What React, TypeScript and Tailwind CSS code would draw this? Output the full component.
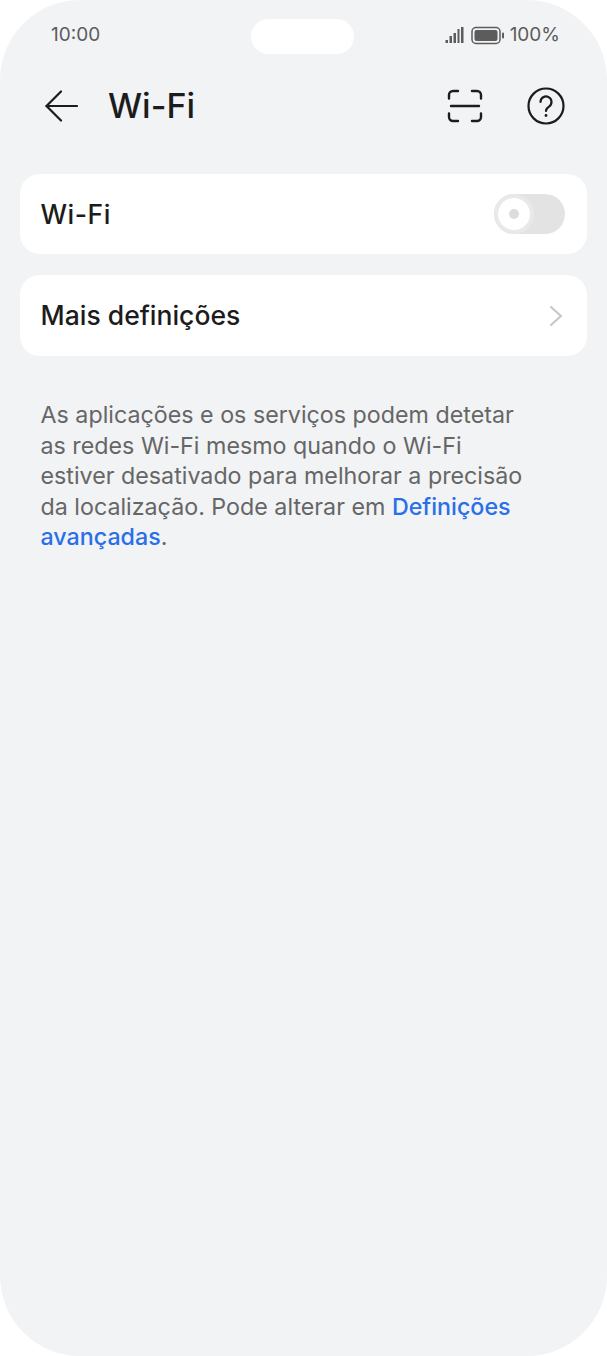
export default function App() {
  return (
    <div className="h-[1356px] w-[607px] bg-white font-['Inter',sans-serif]">
      <div className="flex h-full flex-col rounded-[80px] bg-[#f1f3f5]">
        {/* status bar */}
        <div className="flex items-center pl-[51px] pr-[47px] pt-[19px]">
          <div className="flex-1 pb-[4px] text-[19px] leading-[31px] text-[#5c5c5c]">10:00</div>
          <div className="mr-[6px] h-[35px] w-[103px] rounded-full bg-white" />
          <div className="flex flex-1 items-center justify-end text-[19px] leading-[31px] text-[#5c5c5c]">
            <svg className="mb-[2px]" width="20" height="18" viewBox="0 0 20 18" fill="#5c5c5c">
              <rect x="0.500" y="13" width="2.500" height="3" />
              <rect x="4.500" y="9" width="2.500" height="7" />
              <rect x="8.500" y="6" width="2.500" height="10" />
              <rect x="12.500" y="2" width="2" height="14" />
              <rect x="16" y="0" width="2.500" height="16" />
            </svg>
            <svg className="ml-[6px] mb-[2px]" width="36" height="20" viewBox="0 0 36 20" fill="none">
              <rect x="1" y="1.500" width="28" height="16" rx="4" stroke="#5c5c5c" strokeWidth="1.500" />
              <rect x="3.500" y="4" width="23" height="11" rx="2" fill="#5c5c5c" />
              <rect x="31" y="6.500" width="2" height="6" rx="1" fill="#5c5c5c" />
            </svg>
            <span className="ml-[3px] pb-[4px]">100%</span>
          </div>
        </div>

        {/* title bar */}
        <div className="mt-[24px] flex h-[56px] items-center pl-[45px] pr-[42px]">
          <svg width="33" height="32" viewBox="0 0 33 32" fill="none" stroke="#1c1c1c" strokeWidth="2.200" strokeLinecap="round" strokeLinejoin="round">
            <path d="M32 16H1.500" />
            <path d="M16 1.500 1.500 16 16 30.500" />
          </svg>
          <div className="ml-[30px] flex-1 text-[34px] font-medium leading-[56px] text-[#1c1c1c]">Wi-Fi</div>
          <svg width="36" height="36" viewBox="0 0 36 36" fill="none" stroke="#1c1c1c" strokeWidth="2.400" strokeLinecap="round">
            <path d="M2 10.500V7a4 4 0 0 1 4-4h5" />
            <path d="M25 3h5a4 4 0 0 1 4 4v3.500" />
            <path d="M2 25.500V29a4 4 0 0 0 4 4h5" />
            <path d="M25 33h5a4 4 0 0 0 4-4v-3.500" />
            <path d="M4 18h28" />
          </svg>
          <svg className="ml-[44px]" width="38" height="38" viewBox="0 0 38 38" fill="none" stroke="#1c1c1c" strokeWidth="2.200" strokeLinecap="round">
            <circle cx="19" cy="19" r="17.500" />
            <path d="M13.500 15a5.500 5.500 0 1 1 8.500 4.600c-2 1.300-3 2.300-3 4.400" />
            <circle cx="19" cy="28.500" r="1.400" fill="#1c1c1c" stroke="none" />
          </svg>
        </div>

        {/* rows */}
        <div className="mx-[20px] mt-[40px] flex h-[80px] items-center justify-between rounded-[20px] bg-white pl-[20.500px] pr-[22px]">
          <span className="pt-[1px] text-[26.500px] font-[450] tracking-[0.5px] text-[#1c1c1c]">Wi-Fi</span>
          <div className="flex h-[40px] w-[71px] items-center rounded-full bg-[#e3e3e3]">
            <div className="flex h-[40px] w-[40px] items-center justify-center rounded-full border-[4px] border-[#e9e9e9] bg-white">
              <div className="h-[10px] w-[10px] rounded-full bg-[#dcdcdc]" />
            </div>
          </div>
        </div>
        <div className="mx-[20px] mt-[21px] flex h-[81px] items-center justify-between rounded-[20px] bg-white pl-[20.500px] pr-[24px]">
          <span className="text-[26.500px] font-[450] text-[#1c1c1c]">Mais definições</span>
          <svg width="14" height="22" viewBox="0 0 14 22" fill="none" stroke="#c8c8c8" strokeWidth="2.200" strokeLinecap="round" strokeLinejoin="round">
            <path d="M2 2 12 11 2 20" />
          </svg>
        </div>

        {/* note */}
        <p className="ml-[40.500px] mt-[44px] w-[510px] text-[23.250px] leading-[30.500px] text-[#666666]">
          As aplicações e os serviços podem detetar
          <br />
          as redes Wi-Fi mesmo quando o Wi-Fi
          <br />
          estiver desativado para melhorar a precisão
          <br />
          da localização. Pode alterar em <span className="font-medium text-[#2a6fe8]">Definições</span>
          <br />
          <span className="font-medium text-[#2a6fe8]">avançadas</span>.
        </p>
      </div>
    </div>
  );
}
